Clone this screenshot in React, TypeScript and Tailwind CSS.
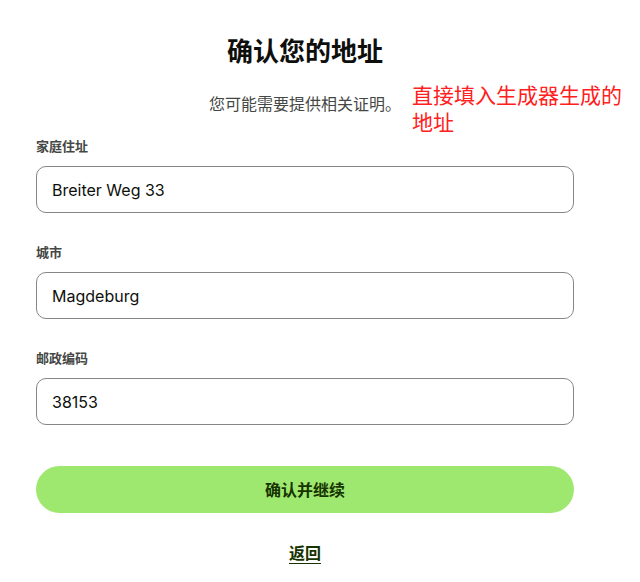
const font = {
  fontFamily: '"Inter", "Noto Sans CJK SC", sans-serif',
};

interface FieldProps {
  label: string;
  value: string;
}

const Field = ({ label, value }: FieldProps) => (
  <div className="flex flex-col">
    <label className="text-[13px] font-semibold leading-5 text-[#454745]">
      {label}
    </label>
    <input
      readOnly
      value={value}
      className="mt-[10px] h-[47px] w-full rounded-[10px] border border-[#868685] px-[15px] text-base text-[#0e0f0c] outline-none"
    />
  </div>
);

export default function App() {
  return (
    <div className="relative min-h-[582px] bg-white" style={font}>
      {/* annotation pasted over the page */}
      <div className="absolute left-[412px] top-[82px] w-[220px] text-[21px] leading-[27px] text-[#ff2020]">
        直接填入生成器生成的地址
      </div>

      <div className="ml-[36px] flex w-[538px] flex-col pt-[36px]">
        <h1 className="text-center text-[26px] font-bold leading-8 text-[#0e0f0c]">
          确认您的地址
        </h1>
        <p className="mt-[24px] text-center text-base leading-6 text-[#454745]">
          您可能需要提供相关证明。
        </p>

        <div className="mt-[20px] flex flex-col gap-[29px]">
          <Field label="家庭住址" value="Breiter Weg 33" />
          <Field label="城市" value="Magdeburg" />
          <Field label="邮政编码" value="38153" />
        </div>

        <button className="mt-[41px] h-[47px] w-full rounded-full bg-[#9fe870] text-base font-bold text-[#163300]">
          确认并继续
        </button>

        <a
          href="#"
          className="mt-[28px] self-center text-base font-bold leading-6 text-[#163300] underline underline-offset-4"
        >
          返回
        </a>
      </div>
    </div>
  );
}
